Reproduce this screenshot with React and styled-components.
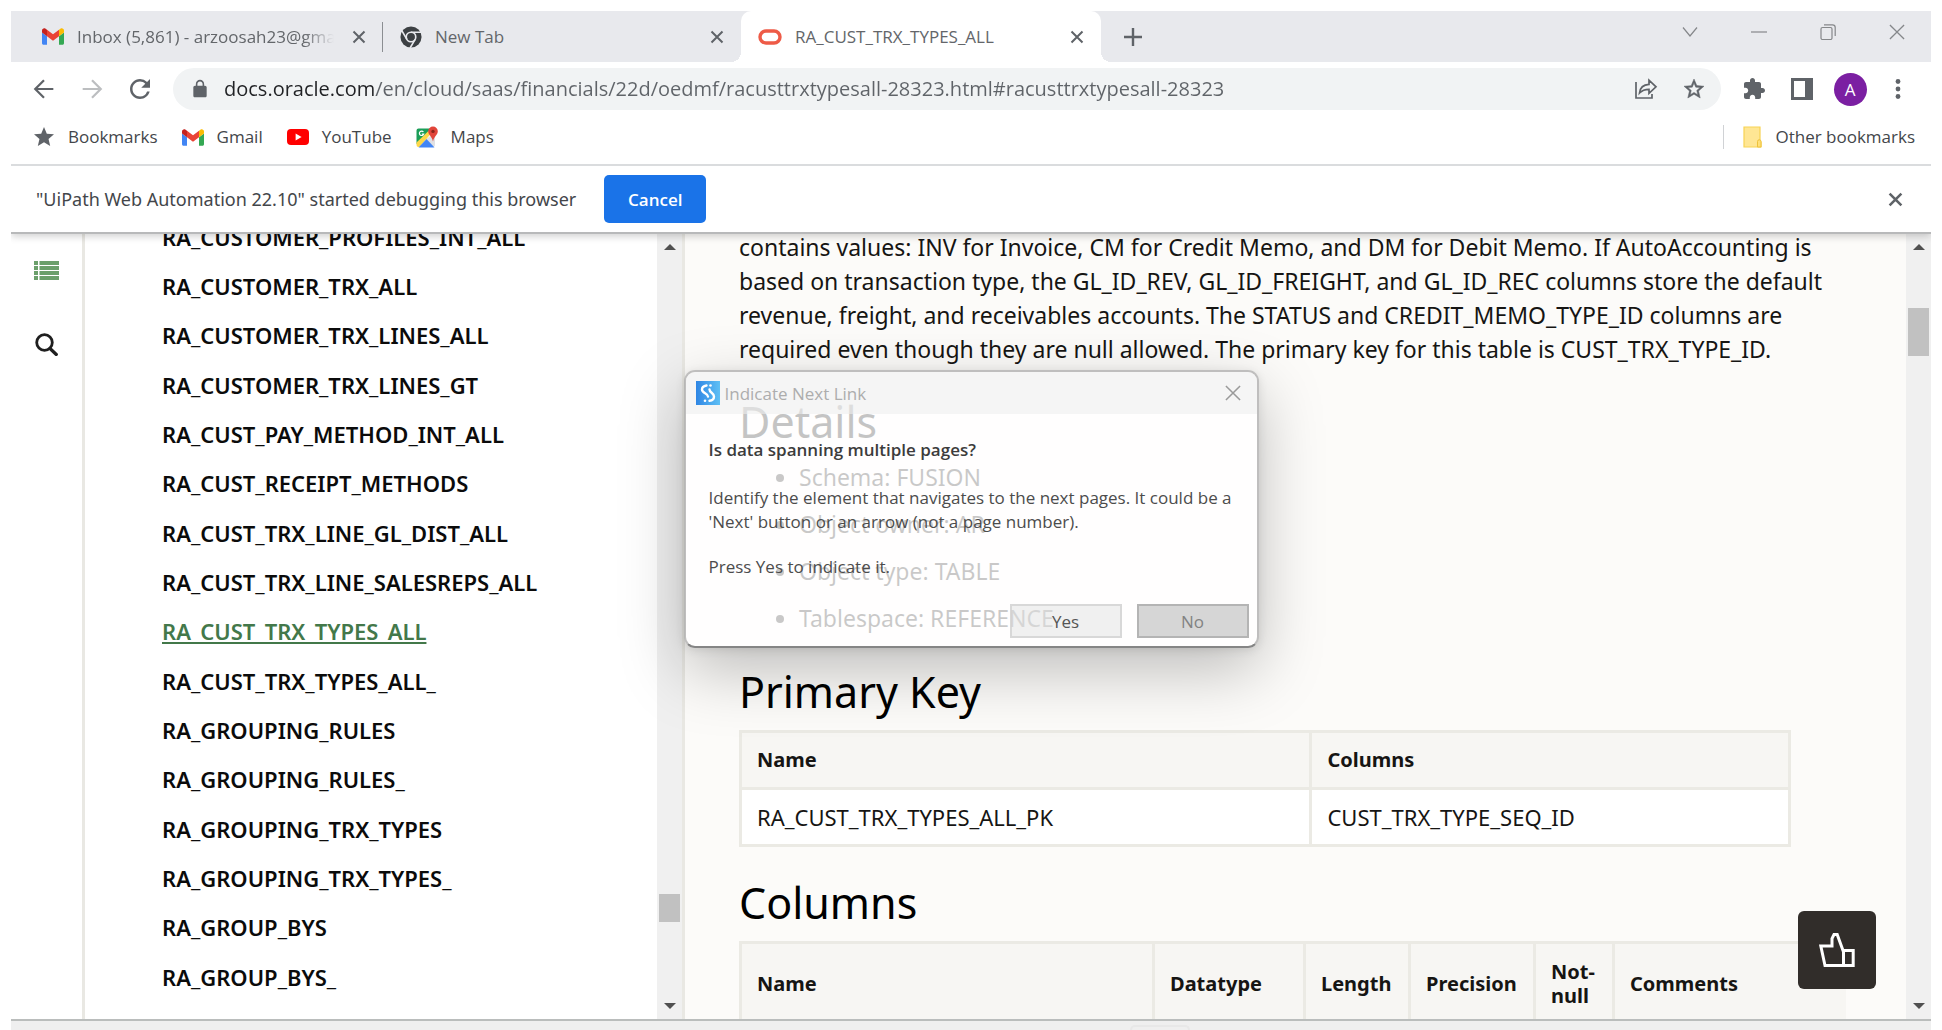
import React from 'react';
import styled, { createGlobalStyle, css } from 'styled-components';

const ui = '"Open Sans", "Noto Sans", sans-serif';
const doc = '"Noto Sans", "Open Sans", sans-serif';

const GlobalStyle = createGlobalStyle`
  *, *::before, *::after { box-sizing: border-box; }
  body { margin: 0; background: #fff; font-family: ${ui}; color: #161513; }
  button { margin: 0; padding: 0; border: 0; background: none; font: inherit; color: inherit; cursor: pointer; }
  ul { margin: 0; padding: 0; }
  svg { display: block; flex: none; }
`;

/* ---------- browser frame ---------- */

const Page = styled.div`
  position: relative;
  display: flex;
  flex-direction: column;
  height: 100vh;
  padding: 11px 11px 0;
  overflow: hidden;
`;

const TabStrip = styled.div`
  display: flex;
  align-items: stretch;
  height: 51px;
  padding-left: 14px;
  background: #e8e9ed;
`;

const Tab = styled.div`
  position: relative;
  display: flex;
  align-items: center;
  gap: 13px;
  width: 358px;
  padding: 0 12px 0 17px;
  color: #63666a;
  ${(p) => p.$divided && css`
    &::after {
      content: '';
      position: absolute;
      top: 11px;
      right: 0;
      width: 1px;
      height: 30px;
      background: #8b8e92;
    }
  `}
  ${(p) => p.$active && css`
    width: 360px;
    border-radius: 10px 10px 0 0;
    background: #fff;
    &::before, &::after {
      content: '';
      position: absolute;
      bottom: 0;
      width: 10px;
      height: 10px;
    }
    &::before { left: -10px; background: radial-gradient(circle at 0 0, transparent 10px, #fff 10px); }
    &::after { right: -10px; background: radial-gradient(circle at 100% 0, transparent 10px, #fff 10px); }
  `}
`;

const TabTitle = styled.button`
  flex: 1;
  min-width: 0;
  overflow: hidden;
  font-size: 17px;
  line-height: 24px;
  text-align: left;
  white-space: nowrap;
  ${(p) => p.$fade && css`mask-image: linear-gradient(90deg, #000 88%, transparent);`}
`;

const IconButton = styled.button`
  display: flex;
  align-items: center;
  justify-content: center;
  flex: none;
  width: ${(p) => p.$w || 24}px;
  height: ${(p) => p.$h || 24}px;
  color: ${(p) => p.$color || '#5f6368'};
`;

const WindowControls = styled.div`
  display: flex;
  margin-left: auto;
`;

const Toolbar = styled.div`
  display: flex;
  align-items: center;
  height: 54px;
  padding: 0 9px;
`;

const Omnibox = styled.label`
  display: flex;
  align-items: center;
  flex: 1;
  gap: 14px;
  height: 42px;
  margin: 0 9px;
  padding: 0 5px 0 17px;
  border-radius: 21px;
  background: #f1f3f4;
  color: #5f6368;
`;

const Address = styled.input`
  flex: 1;
  min-width: 0;
  padding: 0;
  border: 0;
  outline: 0;
  font-family: ${ui};
  font-size: 20px;
  line-height: 28px;
  color: #5f6368;
  background: linear-gradient(90deg, #202124 150px, #5f6368 150px);
  background-clip: text;
  -webkit-text-fill-color: transparent;
`;

const Avatar = styled.span`
  display: flex;
  align-items: center;
  justify-content: center;
  width: 33px;
  height: 33px;
  border-radius: 50%;
  background: #7b1fa2;
  color: #fff;
  font-size: 17px;
`;

const BookmarksBar = styled.nav`
  display: flex;
  align-items: center;
  gap: 24px;
  height: 50px;
  padding: 0 16px 6px 22px;
  border-bottom: 2px solid #dadcde;
`;

const Bookmark = styled.a`
  display: flex;
  align-items: center;
  gap: 13px;
  font-size: 17px;
  line-height: 24px;
  color: #43464a;
  text-decoration: none;
`;

const OtherBookmarks = styled(Bookmark)`
  margin-left: auto;
  padding-left: 19px;
  border-left: 1px solid #d0d2d5;
`;

const InfoBar = styled.div`
  position: relative;
  z-index: 1;
  display: flex;
  align-items: center;
  gap: 28px;
  height: 68px;
  padding: 0 24px 0 25px;
  border-bottom: 2px solid #b8b9ba;
  background: #fff;
  box-shadow: 0 2px 8px rgba(0, 0, 0, 0.2);
  clip-path: inset(0 0 -16px);
  font-family: ${doc};
  font-size: 18px;
  color: #43464a;
`;

const CancelButton = styled.button`
  width: 102px;
  height: 48px;
  border-radius: 5px;
  background: #1a73e8;
  color: #fff;
  font-family: ${ui};
  font-size: 17px;
  font-weight: 600;
`;

const Spacer = styled.span`
  flex: 1;
`;

/* ---------- documentation page ---------- */

const Body = styled.div`
  display: flex;
  flex: 1;
  min-height: 0;
`;

const Rail = styled.div`
  display: flex;
  flex-direction: column;
  align-items: center;
  gap: 51px;
  width: 74px;
  padding-top: 25px;
  border-right: 3px solid #e9e8e3;
`;

const Sidebar = styled.nav`
  width: 572px;
  padding-left: 77px;
  overflow: hidden;
`;

/* The list is scrolled, so its first row starts above the panel. */
const TopicList = styled.ul`
  margin-top: -22px;
  list-style: none;
`;

const Topic = styled.li`
  display: flex;
  align-items: center;
  height: 49px;
  &:nth-child(3n) { height: 50px; }
`;

const TopicLink = styled.a`
  font-family: ${doc};
  font-size: 22px;
  font-weight: 600;
  line-height: 30px;
  color: ${(p) => (p.$current ? '#43784a' : '#0b0b0b')};
  text-decoration: ${(p) => (p.$current ? 'underline 2px' : 'none')};
  text-decoration-skip-ink: none;
  text-underline-offset: 2px;
`;

const ScrollTrack = styled.div`
  display: flex;
  flex-direction: column;
  flex: none;
  width: 25px;
  background: #f0f0f0;
`;

const ScrollGap = styled.div`
  flex: ${(p) => p.$grow} 0 0;
`;

const ScrollThumb = styled.div`
  height: ${(p) => p.$length}px;
  margin: 0 2px;
  background: #c1c1c1;
`;

const Content = styled.div`
  position: relative;
  flex: 1;
  min-width: 0;
  overflow: hidden;
  padding: 0 60px 0 54px;
  border-left: 3px solid #e9e8e3;
  background: #fcfbf9;
  font-family: ${doc};
`;

/* Scrolled with the page: the first line sits just under the info bar. */
const Paragraph = styled.p`
  margin: -4px 0 26px;
  font-size: 23px;
  line-height: 34px;
`;

const Heading = styled.h2`
  margin: 26px 0 8px;
  font-size: 43px;
  font-weight: 400;
  line-height: 60px;
  color: #000;
`;

const DetailList = styled.ul`
  margin: 0 0 27px;
  padding-left: 60px;
  font-size: 23px;
  line-height: 34px;
  li + li { margin-top: 13px; }
`;

const Table = styled.table`
  width: ${(p) => p.$width || '100%'};
  border-collapse: collapse;
  table-layout: fixed;
  th, td {
    padding: 0 0 0 15px;
    border: 3px solid #ebeae4;
    text-align: left;
  }
  th {
    height: ${(p) => p.$headHeight || 57}px;
    background: #f7f6f3;
    font-size: 20px;
    font-weight: 700;
    line-height: 24px;
  }
  ${(p) => p.$openRight && css`th:last-child { border-right: hidden; }`}
  td {
    height: 57px;
    background: #fff;
    font-size: 22px;
  }
`;

const Col = styled.col`
  width: ${(p) => p.$w};
`;

const FeedbackButton = styled.button`
  position: absolute;
  right: 30px;
  bottom: 30px;
  display: flex;
  align-items: center;
  justify-content: center;
  width: 78px;
  height: 78px;
  border-radius: 6px;
  background: #312d2a;
  color: #fff;
`;

const BottomEdge = styled.div`
  display: flex;
  justify-content: center;
  height: 11px;
  padding-left: 377px;
  border-top: 2px solid #babdbc;
  background: #efefef;
`;

const DockTab = styled.div`
  width: 60px;
  margin-top: 4px;
  border: 2px solid #e8e8e8;
  border-bottom: 0;
  border-radius: 8px 8px 0 0;
`;

/* ---------- dialog window ---------- */

const Dialog = styled.section`
  position: absolute;
  z-index: 2;
  top: 370px;
  left: 0;
  right: 0;
  width: 575px;
  margin: 0 auto;
  overflow: hidden;
  border: 2px solid rgba(150, 150, 150, 0.6);
  border-bottom-color: #858585;
  border-radius: 11px;
  background: rgba(255, 255, 255, 0.77);
  background-clip: padding-box;
  box-shadow: 0 22px 64px rgba(0, 0, 0, 0.25), 0 2px 10px rgba(0, 0, 0, 0.1);
`;

const DialogBar = styled.header`
  display: flex;
  align-items: center;
  gap: 5px;
  height: 42px;
  padding: 0 12px 0 10px;
  background: rgba(238, 238, 238, 0.6);
  color: #adadad;
  font-size: 17px;
`;

const DialogText = styled.div`
  padding: 24px 12px 0 23px;
  font-size: 17px;
  line-height: 24px;
  color: #4c4c4c;
  p { margin: 0; }
  p + p { margin-top: 21px; }
`;

const Question = styled.h3`
  margin: 0 0 24px;
  font-size: 17px;
  font-weight: 600;
  line-height: 24px;
  color: #3c3c3c;
`;

const Actions = styled.footer`
  display: flex;
  justify-content: flex-end;
  gap: 15px;
  padding: 25px 8px 8px;
`;

const DialogButton = styled.button`
  width: 112px;
  height: 34px;
  border: 2px solid ${(p) => (p.$filled ? '#b4b4b4' : 'rgba(205, 205, 205, 0.7)')};
  background: ${(p) => (p.$filled ? '#d6d6d6' : 'rgba(225, 225, 225, 0.5)')};
  color: ${(p) => (p.$filled ? '#828282' : '#555')};
  font-size: 17px;
`;

/* ---------- drawings ---------- */

const Svg = ({ w = 24, h = w, box = '0 0 24 24', children }) => (
  <svg width={w} height={h} viewBox={box} fill="currentColor" aria-hidden="true">{children}</svg>
);
const Line = ({ d, s = 2, ...rest }) => (
  <Svg {...rest}><path d={d} fill="none" stroke="currentColor" strokeWidth={s} /></Svg>
);

const Gmail = () => (
  <Svg w={22} h={17} box="52 42 88 66">
    <path fill="#4285f4" d="M58 108h14V74L52 59v43c0 3.32 2.69 6 6 6" />
    <path fill="#34a853" d="M120 108h14c3.32 0 6-2.69 6-6V59l-20 15" />
    <path fill="#fbbc04" d="M120 48v26l20-15v-8c0-7.42-8.47-11.65-14.4-7.2" />
    <path fill="#ea4335" d="M72 74V48l24 18 24-18v26L96 92" />
    <path fill="#c5221f" d="M52 51v8l20 15V48l-5.6-4.2c-5.94-4.45-14.4-.22-14.4 7.2" />
  </Svg>
);
const Chrome = () => (
  <Svg w={22}>
    <circle cx="12" cy="12" r="11.5" fill="#3c4043" />
    <g stroke="#e8e9ed" strokeWidth="1.8" fill="none">
      <circle cx="12" cy="12" r="5.2" />
      <path d="M12 6.8h11M16.5 14.6L11 24M7.5 14.6L2 5" />
    </g>
  </Svg>
);
const Oracle = () => (
  <Svg w={24} h={16} box="0 0 24 16"><rect x="2" y="2" width="20" height="12" rx="6" fill="none" stroke="#ee5b47" strokeWidth="3.4" /></Svg>
);
const YouTube = () => (
  <Svg w={22} h={16} box="0 0 22 16"><rect width="22" height="16" rx="4" fill="#f00" /><path d="M8.6 4.6v6.8L14.600 8z" fill="#fff" /></Svg>
);
const Maps = () => (
  <Svg w={22} h={22} box="0 0 22 22">
    <path d="M19 7v12a2 2 0 0 1-2 2L10 13z" fill="#e0e1e4" />
    <path d="M.5 4.500a2 2 0 0 1 2-2h14L.5 18z" fill="#1b9e58" />
    <path d="M.5 16.500L14 3.500h4.500L3.500 21H2.500a2 2 0 0 1-2-2z" fill="#fdd748" />
    <path d="M2.500 21.500l8-8.500 8 8.500z" fill="#4285f4" />
    <path d="M7.400 6A2.200 2.200 0 1 0 7.700 8H5.800" fill="none" stroke="#fff" strokeWidth="1.200" />
    <path d="M17 .5a4.800 4.800 0 0 1 4.800 4.800c0 3.700-3.800 5-4.800 10.200-1-5.200-4.800-6.500-4.800-10.200A4.800 4.800 0 0 1 17 .5z" fill="#e1453a" />
    <circle cx="17" cy="5.400" r="1.700" fill="#8c2419" />
  </Svg>
);
const Folder = () => (
  <Svg w={19} h={22} box="0 0 19 22">
    <path d="M1 1h16v14l1 1v5H1z" fill="#ffe694" stroke="#f7d354" strokeWidth="1.2" />
    <path d="M14.500 21v-5.500a1.500 1.500 0 0 1 3.500 0V21z" fill="#ffe07a" stroke="#eec23a" />
  </Svg>
);
const Close = ({ w = 14, s = 2 }) => <Line w={w} box="0 0 14 14" s={s} d="M1.500 1.500l11 11M12.500 1.500l-11 11" />;
const StarIcon = () => (
  <Svg w={22} box="1 1 22 22"><path d="M12 17.27L18.18 21l-1.64-7.03L22 9.24l-7.19-.61L12 2 9.19 8.63 2 9.24l5.46 4.73L5.82 21z" fill="#5f6368" /></Svg>
);
const StudioLogo = () => (
  <Svg w={24}>
    <defs><linearGradient id="studio" x1="0" x2="1"><stop offset="0" stopColor="#2f86e4" /><stop offset="1" stopColor="#5fc0f5" /></linearGradient></defs>
    <rect width="24" height="24" fill="url(#studio)" />
    <path d="M10.500 4.500C7.500 5 6 6.800 6 8.600c0 3.800 6 3.600 6 7M13.500 8.500c0 3.200 4.500 3.400 4.500 7 0 2.400-1.800 4-4.500 4.300" fill="none" stroke="#fff" strokeWidth="2.400" strokeLinecap="round" />
    <circle cx="14.500" cy="4.500" r="1.300" fill="#fff" />
    <circle cx="9" cy="19.700" r="1.300" fill="#fff" />
  </Svg>
);

const Arrow = ({ down }) => (
  <IconButton $w={25} $h={26} $color="#505050" aria-label={down ? 'Scroll down' : 'Scroll up'}>
    <Svg w={12} h={6} box="0 0 12 6"><path d={down ? 'M0 0h12L6 6z' : 'M0 6h12L6 0z'} /></Svg>
  </IconButton>
);
const Scrollbar = ({ before, length, after }) => (
  <ScrollTrack>
    <Arrow />
    <ScrollGap $grow={before} />
    <ScrollThumb $length={length} />
    <ScrollGap $grow={after} />
    <Arrow down />
  </ScrollTrack>
);

const topics = [
  'RA_CUSTOMER_PROFILES_INT_ALL', 'RA_CUSTOMER_TRX_ALL', 'RA_CUSTOMER_TRX_LINES_ALL',
  'RA_CUSTOMER_TRX_LINES_GT', 'RA_CUST_PAY_METHOD_INT_ALL', 'RA_CUST_RECEIPT_METHODS',
  'RA_CUST_TRX_LINE_GL_DIST_ALL', 'RA_CUST_TRX_LINE_SALESREPS_ALL', 'RA_CUST_TRX_TYPES_ALL',
  'RA_CUST_TRX_TYPES_ALL_', 'RA_GROUPING_RULES', 'RA_GROUPING_RULES_', 'RA_GROUPING_TRX_TYPES',
  'RA_GROUPING_TRX_TYPES_', 'RA_GROUP_BYS', 'RA_GROUP_BYS_',
];
const current = 'RA_CUST_TRX_TYPES_ALL';

const details = ['Schema: FUSION', 'Object owner: AR', 'Object type: TABLE', 'Tablespace: REFERENCE'];

const columnHeads = [
  ['Name', '413px'], ['Datatype', '151px'], ['Length', '105px'],
  ['Precision', '125px'], ['Not-null', '79px'], ['Comments', 'auto'],
];

export default function App() {
  return (
    <Page>
      <GlobalStyle />
      <TabStrip>
        <Tab $divided>
          <Gmail />
          <TabTitle $fade>Inbox (5,861) - arzoosah23@gmail.com</TabTitle>
          <IconButton aria-label="Close tab"><Close /></IconButton>
        </Tab>
        <Tab>
          <Chrome />
          <TabTitle>New Tab</TabTitle>
          <IconButton aria-label="Close tab"><Close /></IconButton>
        </Tab>
        <Tab $active>
          <Oracle />
          <TabTitle>RA_CUST_TRX_TYPES_ALL</TabTitle>
          <IconButton aria-label="Close tab"><Close /></IconButton>
        </Tab>
        <IconButton $w={64} $h={51} aria-label="New tab"><Line w={18} box="0 0 18 18" s={2.4} d="M9 0v18M0 9h18" /></IconButton>
        <WindowControls>
          <IconButton $w={69} $h={42} $color="#85878a" aria-label="Search tabs"><Line w={16} h={10} box="0 0 16 10" s={1.2} d="M1 .5l7 8.5 7-8.5" /></IconButton>
          <IconButton $w={69} $h={42} $color="#85878a" aria-label="Minimize"><Line w={16} h={2} box="0 0 16 2" s={1.2} d="M0 1h16" /></IconButton>
          <IconButton $w={69} $h={42} $color="#85878a" aria-label="Restore"><Line w={16} box="0 0 16 16" s={1.2} d="M2.500 3.500h8A1.500 1.500 0 0 1 12 5v9a1.500 1.500 0 0 1-1.500 1.500h-8A1.500 1.500 0 0 1 1 14V5a1.500 1.500 0 0 1 1.500-1.500M4 .8h8.500a2.700 2.700 0 0 1 2.700 2.700V12" /></IconButton>
          <IconButton $w={69} $h={42} $color="#85878a" aria-label="Close window"><Close w={18} s={1} /></IconButton>
        </WindowControls>
      </TabStrip>

      <Toolbar>
        <IconButton $w={48} $h={42} aria-label="Back"><Line w={28} s={1.9} d="M20 12H4.800M12 4.500L4.500 12l7.500 7.500" /></IconButton>
        <IconButton $w={48} $h={42} $color="#bcbec0" aria-label="Forward"><Line w={28} s={1.9} d="M4 12h15.200M12 4.500l7.500 7.500-7.500 7.500" /></IconButton>
        <IconButton $w={48} $h={42} aria-label="Reload"><Svg w={30}><path d="M17.65 6.35A7.958 7.958 0 0 0 12 4c-4.42 0-7.99 3.58-7.99 8s3.57 8 7.99 8c3.73 0 6.84-2.55 7.73-6h-2.08A5.99 5.99 0 0 1 12 18c-3.31 0-6-2.69-6-6s2.69-6 6-6c1.66 0 3.14.69 4.22 1.78L13 11h7V4l-2.35 2.35z" /></Svg></IconButton>
        <Omnibox>
          <Svg w={20}><path d="M18 8h-1V6c0-2.76-2.24-5-5-5S7 3.24 7 6v2H6c-1.100 0-2 .9-2 2v10c0 1.100.9 2 2 2h12c1.100 0 2-.9 2-2V10c0-1.100-.9-2-2-2zm-2.900 0H8.900V6c0-1.710 1.390-3.100 3.100-3.100s3.100 1.390 3.100 3.100v2z" /></Svg>
          <Address
            aria-label="Address"
            spellCheck={false}
            defaultValue="docs.oracle.com/en/cloud/saas/financials/22d/oedmf/racusttrxtypesall-28323.html#racusttrxtypesall-28323"
          />
          <IconButton aria-label="Share page"><Line w={24} s={1.7} d="M2 5v16h16v-4M5.500 16c.6-5.500 4-8.300 9.500-8.600V3.200l7 6.600-7 6.600v-4c-4.200 0-7 1-9.500 3.600z" /></IconButton>
          <IconButton $w={44} aria-label="Bookmark page"><Svg w={24}><path d="M22 9.24l-7.19-.62L12 2 9.19 8.63 2 9.24l5.46 4.73L5.82 21 12 17.27 18.18 21l-1.63-7.03L22 9.24zM12 15.4l-3.76 2.27 1-4.28-3.32-2.88 4.38-.38L12 6.1l1.71 4.04 4.38.38-3.32 2.88 1 4.28L12 15.4z" stroke="currentColor" strokeWidth=".5" /></Svg></IconButton>
        </Omnibox>
        <IconButton $w={48} $h={42} aria-label="Extensions"><Svg w={24}><path d="M20.5 11H19V7c0-1.100-.9-2-2-2h-4V3.500C13 2.120 11.880 1 10.500 1S8 2.120 8 3.500V5H4c-1.100 0-1.990.9-1.990 2v3.800H3.500c1.490 0 2.700 1.210 2.700 2.700s-1.210 2.700-2.700 2.700H2V20c0 1.100.9 2 2 2h3.800v-1.500c0-1.490 1.210-2.700 2.700-2.700 1.490 0 2.700 1.210 2.700 2.700V22H17c1.100 0 2-.9 2-2v-4h1.500c1.380 0 2.500-1.120 2.500-2.500S21.880 11 20.500 11z" /></Svg></IconButton>
        <IconButton $w={48} $h={42} aria-label="Side panel"><Svg w={22} box="0 0 22 22"><path d="M0 0h22v22H0zM3 3v16h11V3z" fillRule="evenodd" /></Svg></IconButton>
        <IconButton $w={48} $h={42} aria-label="Profile"><Avatar>A</Avatar></IconButton>
        <IconButton $w={48} $h={42} aria-label="Menu"><Svg w={6} h={20} box="0 0 6 20"><circle cx="3" cy="2.500" r="2.400" /><circle cx="3" cy="10" r="2.400" /><circle cx="3" cy="17.500" r="2.400" /></Svg></IconButton>
      </Toolbar>

      <BookmarksBar>
        <Bookmark href="#bookmarks"><StarIcon />Bookmarks</Bookmark>
        <Bookmark href="#gmail"><Gmail />Gmail</Bookmark>
        <Bookmark href="#youtube"><YouTube />YouTube</Bookmark>
        <Bookmark href="#maps"><Maps />Maps</Bookmark>
        <OtherBookmarks href="#other"><Folder />Other bookmarks</OtherBookmarks>
      </BookmarksBar>

      <InfoBar>
        <span>"UiPath Web Automation 22.10" started debugging this browser</span>
        <CancelButton>Cancel</CancelButton>
        <Spacer />
        <IconButton aria-label="Dismiss"><Close w={15} s={2.4} /></IconButton>
      </InfoBar>

      <Body>
        <Rail>
          <IconButton $w={26} $h={22} $color="#6b9f6b" aria-label="Contents">
            <Svg w={25} h={19} box="0 0 25 19">
              {[0, 5, 10, 15].map((y) => <path key={y} d={`M0 ${y}h4v4H0zM5.500 ${y}H25v4H5.500z`} />)}
            </Svg>
          </IconButton>
          <IconButton $w={26} $color="#1f1f1f" aria-label="Search">
            <Svg w={23} box="0 0 23 23"><circle cx="9.500" cy="9.500" r="7.800" fill="none" stroke="currentColor" strokeWidth="2.800" /><path d="M15 15.500l6.300 6" stroke="currentColor" strokeWidth="3.200" strokeLinecap="round" /></Svg>
          </IconButton>
        </Rail>
        <Sidebar aria-label="Topics">
          <TopicList>
            {topics.map((t) => (
              <Topic key={t}><TopicLink href={`#${t}`} $current={t === current}>{t}</TopicLink></Topic>
            ))}
          </TopicList>
        </Sidebar>
        <Scrollbar before={635} length={28} after={71} />
        <Content>
          <Paragraph>
            contains values: INV for Invoice, CM for Credit Memo, and DM for Debit Memo. If AutoAccounting is
            based on transaction type, the GL_ID_REV, GL_ID_FREIGHT, and GL_ID_REC columns store the default
            revenue, freight, and receivables accounts. The STATUS and CREDIT_MEMO_TYPE_ID columns are
            required even though they are null allowed. The primary key for this table is CUST_TRX_TYPE_ID.
          </Paragraph>
          <Heading>Details</Heading>
          <DetailList>{details.map((d) => <li key={d}>{d}</li>)}</DetailList>
          <Heading>Primary Key</Heading>
          <Table $width="95%">
            <colgroup><Col $w="54.4%" /><Col /></colgroup>
            <thead><tr><th scope="col">Name</th><th scope="col">Columns</th></tr></thead>
            <tbody><tr><td>RA_CUST_TRX_TYPES_ALL_PK</td><td>CUST_TRX_TYPE_SEQ_ID</td></tr></tbody>
          </Table>
          <Heading>Columns</Heading>
          <Table $headHeight={82} $openRight>
            <colgroup>{columnHeads.map(([n, w]) => <Col key={n} $w={w} />)}</colgroup>
            <thead><tr>{columnHeads.map(([n]) => <th key={n} scope="col">{n}</th>)}</tr></thead>
          </Table>
          <FeedbackButton aria-label="Feedback">
            <Line w={36} h={34} box="0 0 36 34" s={3} d="M1.800 13H13V5.500l2-4h3.200L24 17.500h10.200v15H6zM24.500 17.500v15" />
          </FeedbackButton>
        </Content>
        <Scrollbar before={48} length={48} after={638} />
      </Body>
      <BottomEdge><DockTab /></BottomEdge>

      <Dialog role="dialog" aria-labelledby="dialog-title">
        <DialogBar>
          <StudioLogo />
          <span id="dialog-title">Indicate Next Link</span>
          <Spacer />
          <IconButton $color="#9a9a9a" aria-label="Close dialog"><Close w={18} s={1.2} /></IconButton>
        </DialogBar>
        <DialogText>
          <Question>Is data spanning multiple pages?</Question>
          <p>Identify the element that navigates to the next pages. It could be a 'Next' button or an arrow (not a page number).</p>
          <p>Press Yes to indicate it.</p>
        </DialogText>
        <Actions>
          <DialogButton>Yes</DialogButton>
          <DialogButton $filled>No</DialogButton>
        </Actions>
      </Dialog>
    </Page>
  );
}
